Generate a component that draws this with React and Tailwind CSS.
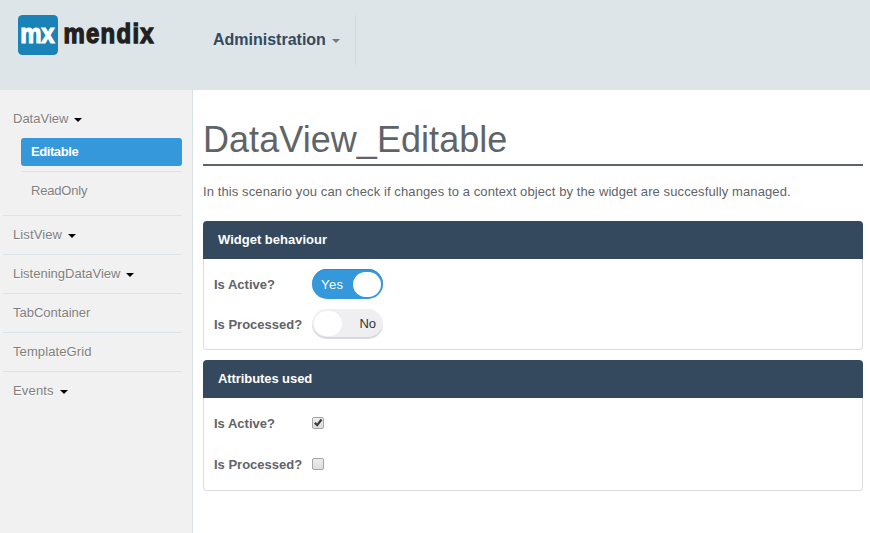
import React from "react";

function Caret({ className = "" }) {
  return (
    <svg className={className} width="8" height="4" viewBox="0 0 8 4" aria-hidden="true">
      <path d="M0 0H8L4 4Z" fill="currentColor" />
    </svg>
  );
}

function Logo() {
  return (
    <svg width="160" height="60" viewBox="0 0 160 60" className="block shrink-0 overflow-visible font-['Liberation_Sans',Arial,sans-serif] font-bold">
      <rect x="18" y="15" width="40" height="40" rx="4.5" fill="#1983b7" />
      <text transform="translate(20.3 42.6) scale(.84 1)" fontSize="28.5" letterSpacing="-0.3" fill="#fff" stroke="#fff" strokeWidth="1.2">mx</text>
      <text transform="translate(63.4 42.6) scale(.84 1)" fontSize="28.5" letterSpacing="1.55" fill="#231f20" stroke="#231f20" strokeWidth="1.4">mendix</text>
    </svg>
  );
}

function NavItem({ label, caret, first, children }) {
  return (
    <li className={first ? "" : "border-t border-[#dbe4e8]"}>
      <div className={`flex items-center pl-[10px] ${first ? "h-[39px] pt-px" : "h-[38px]"}`}>
        <span>{label}</span>
        {caret && <Caret className="mt-[2px] ml-[6px] text-black" />}
      </div>
      {children}
    </li>
  );
}

function Panel({ title, bodyClass, children }) {
  return (
    <section>
      <h2 className="flex h-[38px] items-center rounded-t-[4px] bg-[#34495e] pl-[15px] text-[13px] font-bold text-white">{title}</h2>
      <div className={`rounded-b-[4px] border border-t-0 border-[#dcdcdc] pl-[10px] ${bodyClass}`}>{children}</div>
    </section>
  );
}

function Row({ label, className, labelClass = "", children }) {
  return (
    <div className={`flex items-center ${className}`}>
      <span className={`w-[98px] font-bold whitespace-nowrap ${labelClass}`}>{label}</span>
      {children}
    </div>
  );
}

function Toggle({ on }) {
  return on ? (
    <div className="flex h-[30px] w-[71px] items-center justify-between rounded-full bg-[#3498db] pr-[2px] pl-[9px] text-white shadow-[inset_0_1px_0_#2f8bc9]">
      <span className="pt-[2px] tracking-[0.4px]">Yes</span>
      <span className="h-[25px] w-[28px] rounded-full bg-white" />
    </div>
  ) : (
    <div className="flex h-[30px] w-[71px] items-center justify-between rounded-full bg-[#efeff1] pr-[7px] pl-[2px] text-[#333] shadow-[inset_0_-2px_0_#d8d8e0]">
      <span className="mb-[2px] h-[25px] w-[28px] rounded-full bg-white" />
      <span>No</span>
    </div>
  );
}

function Checkbox({ checked }) {
  return (
    <svg width="12" height="13" viewBox="0 0 12 13">
      <defs>
        <linearGradient id="box" x1="0" y1="0" x2="0" y2="1">
          <stop offset="0" stopColor="#eeeeee" />
          <stop offset="1" stopColor="#dcdcdc" />
        </linearGradient>
      </defs>
      <rect x=".5" y=".5" width="11" height="11" rx="1.5" fill="url(#box)" stroke="#a5a5a5" />
      {checked && <path d="M2 6.4L3.6 5L5.1 6.5L8.6 1.8L10.4 3.2L5.3 9.8Z" fill="#3b3b3b" />}
    </svg>
  );
}

export default function App() {
  return (
    <div className="flex h-[533px] w-[870px] flex-col overflow-hidden bg-white font-['Liberation_Sans',Arial,sans-serif] text-[13px] text-[#5f6468]">
      <header className="flex h-[90px] shrink-0 bg-[#dee5e8]">
        <Logo />
        <div className="mt-[15px] ml-[53px] flex h-[50px] w-[143px] items-center border-r border-[#d3dadd] text-[16px] font-bold text-[#34495e]">
          <span>Administration</span>
          <Caret className="mt-[2px] ml-[6px] text-[#777]" />
        </div>
      </header>
      <div className="flex min-h-0 flex-1">
        <nav className="w-[193px] shrink-0 border-r border-[#d5e1e7] bg-[#f1f1f1] pt-[9px] pr-[10px] pl-[3px] text-[#7f7f7f] [text-shadow:0_1px_0_#fff]">
          <ul>
            <NavItem label="DataView" caret first>
              <ul className="mb-[5px] ml-[18px]">
                <li className="flex h-[28px] items-center rounded-[3px] bg-[#3498db] pl-[10px] font-bold tracking-[-0.42px] text-white [text-shadow:none]">Editable</li>
                <li className="mt-[5px] flex h-[39px] items-center border-t border-[#dbe4e8] pl-[10px] tracking-[-0.2px]">ReadOnly</li>
              </ul>
            </NavItem>
            <NavItem label={<span className="tracking-[0.1px]">ListView</span>} caret />
            <NavItem label="ListeningDataView" caret />
            <NavItem label="TabContainer" />
            <NavItem label={<span className="tracking-[0.1px]">TemplateGrid</span>} />
            <NavItem label={<span className="tracking-[0.16px]">Events</span>} caret />
          </ul>
        </nav>
        <main className="flex-1 pr-[7px] pl-[10px]">
          <h1 className="mt-[29px] h-[47px] border-b-2 border-[#5f6468] text-[36px] leading-[42px] tracking-[0.05px]">DataView_Editable</h1>
          <p className="mt-[17px] mb-[20px] text-[13px] leading-[18px] tracking-[0.103px] whitespace-nowrap">
            In this scenario you can check if changes to a context object by the widget are succesfully managed.
          </p>
          <div className="flex flex-col gap-[10px]">
            <Panel title="Widget behaviour" bodyClass="h-[91px] pt-[10px]">
              <Row label="Is Active?" className="mb-[10px] h-[30px]" labelClass="pt-[2px]"><Toggle on /></Row>
              <Row label="Is Processed?" className="h-[30px]" labelClass="pt-[2px]"><Toggle /></Row>
            </Panel>
            <Panel title={<span className="tracking-[-0.08px]">Attributes used</span>} bodyClass="h-[93px] pt-[5px]">
              <Row label="Is Active?" className="h-[41px]"><Checkbox checked /></Row>
              <Row label="Is Processed?" className="h-[41px]"><Checkbox /></Row>
            </Panel>
          </div>
        </main>
      </div>
    </div>
  );
}
